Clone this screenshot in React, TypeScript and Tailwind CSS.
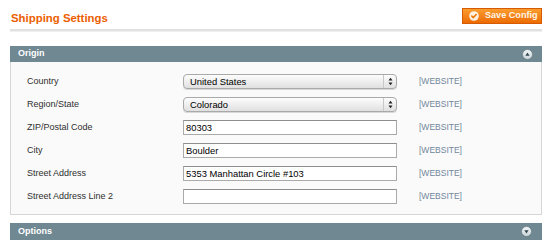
import React from "react";

const rows: { label: string; type: "select" | "input"; value: string }[] = [
  { label: "Country", type: "select", value: "United States" },
  { label: "Region/State", type: "select", value: "Colorado" },
  { label: "ZIP/Postal Code", type: "input", value: "80303" },
  { label: "City", type: "input", value: "Boulder" },
  { label: "Street Address", type: "input", value: "5353 Manhattan Circle #103" },
  { label: "Street Address Line 2", type: "input", value: "" },
];

function CircleIcon({ up }: { up: boolean }) {
  return (
    <svg width="11" height="11" viewBox="0 0 11 11">
      <defs>
        <linearGradient id={up ? "cg1" : "cg2"} x1="0" y1="0" x2="0" y2="1">
          <stop offset="0" stopColor="#f4f7f8" />
          <stop offset="1" stopColor="#c9d3d7" />
        </linearGradient>
      </defs>
      <circle cx="5.5" cy="5.5" r="5" fill={`url(#${up ? "cg1" : "cg2"})`} stroke="#5b727b" strokeWidth="0.6" />
      {up ? (
        <path d="M3.4 6.8 L5.5 3.6 L7.6 6.8 Z" fill="#2f4650" />
      ) : (
        <path d="M3.4 4.2 L5.5 7.4 L7.6 4.2 Z" fill="#2f4650" />
      )}
    </svg>
  );
}

function Select({ value }: { value: string }) {
  return (
    <div className="flex h-[15px] w-[214px] items-center rounded-[4px] border border-[#a9a9a9] bg-gradient-to-b from-[#fdfdfd] to-[#e0e0e0] shadow-[0_1px_0_#d8d8d8]">
      <span className="flex-1 pl-[6px] text-[9.4px] leading-none text-black">{value}</span>
      <div className="flex h-full w-[13px] items-center justify-center border-l border-[#c8c8c8]">
        <svg width="5" height="9" viewBox="0 0 5 9">
          <path d="M0.5 3.6 L2.5 0.8 L4.5 3.6 Z" fill="#222" />
          <path d="M0.5 5.4 L2.5 8.2 L4.5 5.4 Z" fill="#222" />
        </svg>
      </div>
    </div>
  );
}

function Input({ value }: { value: string }) {
  return (
    <div className="flex h-[15px] w-[214px] items-center border border-[#aaaaaa] border-t-[#8e8e8e] bg-white pl-[2px] text-[9.4px] leading-none text-black">
      {value}
    </div>
  );
}

export default function App() {
  return (
    <div
      className="h-[251px] w-[550px] overflow-hidden bg-white"
      style={{ fontFamily: '"Liberation Sans", Arial, Helvetica, sans-serif' }}
    >
      <div className="ml-[10px] mr-[8px]">
        <div className="flex h-[29px] items-start justify-between">
          <h1 className="mt-[12px] pl-[1px] text-[11.4px] font-bold leading-[13px] text-[#eb5e00]">
            Shipping Settings
          </h1>
          <button className="mt-[8px] flex h-[16px] w-[80px] items-center gap-[4px] border border-[#d65a00] bg-gradient-to-b from-[#fb9d2d] to-[#ec6b00] pl-[6px] text-[9.1px] font-bold leading-none text-[#fff6e8]">
            <svg width="10" height="10" viewBox="0 0 10 10">
              <circle cx="5" cy="5" r="4.8" fill="#fdf1e2" />
              <path d="M2.8 5.1 L4.4 6.6 L7.2 3.5" stroke="#ef7400" strokeWidth="1.5" fill="none" strokeLinecap="round" strokeLinejoin="round" />
            </svg>
            <span className="ml-[2px]">Save Config</span>
          </button>
        </div>
        <div className="h-[3px] border-t-2 border-b border-t-[#e1e1e1] border-b-[#f0f0f0]" />

        <div className="mt-[14px]">
          <div className="flex h-[16px] items-center justify-between bg-[#6f8892] pl-[8px] pr-[9px]">
            <span className="text-[9px] font-bold text-white">Origin</span>
            <CircleIcon up />
          </div>
          <div className="border border-t-0 border-[#d6d6d6] bg-[#fafafa] pb-[6px] pt-[8px]">
            {rows.map((r) => (
              <div key={r.label} className="flex h-[23px] items-center">
                <span className="w-[172px] pl-[16px] text-[9px] text-[#2f2f2f]">{r.label}</span>
                {r.type === "select" ? <Select value={r.value} /> : <Input value={r.value} />}
                <span className="ml-[22px] text-[8.5px] text-[#71879a]">[WEBSITE]</span>
              </div>
            ))}
          </div>
        </div>

        <div className="mt-[8px] flex h-[17px] items-center justify-between bg-[#6f8892] pl-[8px] pr-[10px]">
          <span className="text-[9px] font-bold text-white">Options</span>
          <CircleIcon up={false} />
        </div>
      </div>
    </div>
  );
}
